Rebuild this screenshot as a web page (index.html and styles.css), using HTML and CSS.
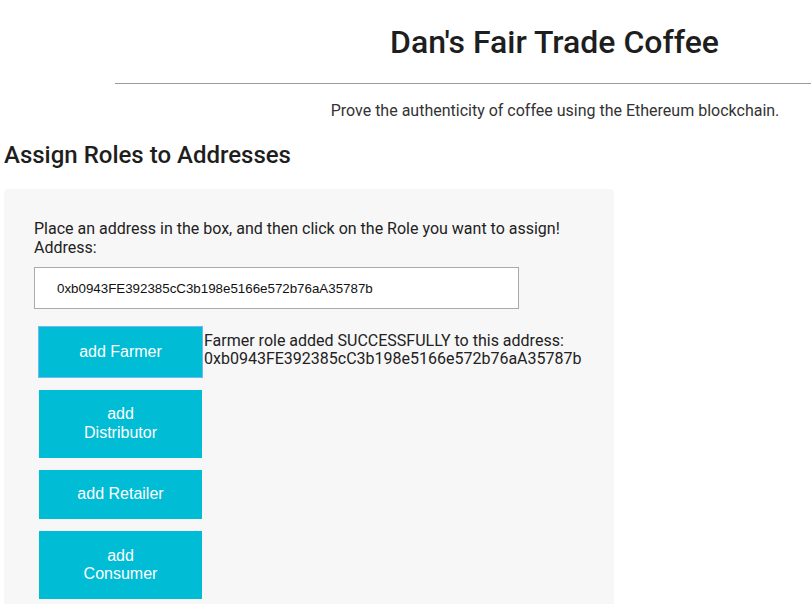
FILE: index.html
```html
<!DOCTYPE html>
<html>
<head>
<meta charset="utf-8">
<link rel="stylesheet" href="styles.css">
</head>
<body>
<header class="header">
  <h1 class="title">Dan's Fair Trade Coffee</h1>
  <hr class="rule">
  <p class="subtitle">Prove the authenticity of coffee using the Ethereum blockchain.</p>
</header>
<h2 class="section-title">Assign Roles to Addresses</h2>
<section class="panel">
  <p class="hint">Place an address in the box, and then click on the Role you want to assign!<br>Address:</p>
  <input class="address" type="text" value="0xb0943FE392385cC3b198e5166e572b76aA35787b">
  <div class="roles">
    <div class="role-row">
      <button class="role-btn focused">add Farmer</button>
      <span class="message">Farmer role added SUCCESSFULLY to this address:<br>0xb0943FE392385cC3b198e5166e572b76aA35787b</span>
    </div>
    <div class="role-row"><button class="role-btn">add Distributor</button></div>
    <div class="role-row"><button class="role-btn">add Retailer</button></div>
    <div class="role-row"><button class="role-btn">add Consumer</button></div>
  </div>
</section>
</body>
</html>
```
FILE: styles.css
```css
body {
  margin: 0;
  padding: 0 4px;
  font-family: Roboto, "Liberation Sans", sans-serif;
  color: #222;
  background: #fff;
}
.header {
  margin-left: 111px;
  padding-top: 22px;
}
.title {
  margin: 0;
  padding-left: 187px;
  text-align: center;
  font-size: 32px;
  font-weight: 500;
  line-height: 40px;
  color: #1e1e1e;
}
.rule {
  margin: 21px -4px 0 0;
  border: 0;
  border-top: 1px solid #9a9a9a;
}
.subtitle {
  margin: 17px 0 0;
  padding-left: 188px;
  text-align: center;
  font-size: 16px;
  line-height: 20px;
  color: #333;
}
.section-title {
  margin: 19px 0 0;
  font-size: 24px;
  font-weight: 500;
  line-height: 30px;
  color: #1e1e1e;
}
.panel {
  margin-top: 19px;
  width: 610px;
  box-sizing: border-box;
  background: #f7f7f7;
  border-radius: 4px;
  padding: 30px 30px 30px;
}
.hint {
  margin: 0;
  font-size: 16px;
  line-height: 19px;
  color: #222;
}
.address {
  display: block;
  margin-top: 10px;
  width: 485px;
  height: 42px;
  box-sizing: border-box;
  border: 1px solid #aaa;
  background: #fff;
  padding: 0 22px;
  font-family: "Liberation Sans", Arial, sans-serif;
  font-size: 13.33px;
  color: #111;
}
.roles {
  display: flex;
  flex-direction: column;
  gap: 12px;
  margin-top: 17px;
  padding-left: 5px;
}
.role-row {
  display: flex;
  align-items: flex-start;
}
.role-btn {
  width: 163px;
  box-sizing: border-box;
  padding: 15.5px 30px;
  border: 0;
  background: #00bcd4;
  color: #fff;
  font-family: "Liberation Sans", Arial, sans-serif;
  font-size: 16px;
  line-height: 18.5px;
}
.role-btn.focused {
  width: 165px;
  margin-left: -1px;
  border: 1px solid #6fb6f2;
  outline: none;
}
.message {
  margin-left: 1px;
  margin-top: 6px;
  font-size: 16px;
  line-height: 18px;
  color: #222;
}
```
